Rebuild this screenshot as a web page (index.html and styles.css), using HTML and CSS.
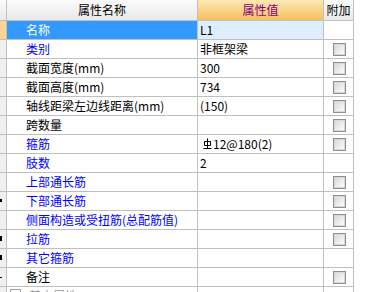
FILE: index.html
```html
<!DOCTYPE html>
<html>
<head>
<meta charset="utf-8">
<link rel="stylesheet" href="styles.css">
</head>
<body>
<div class="grid">
  <div class="c rh hd"></div>
  <div class="c hd name-h">属性名称</div>
  <div class="c hd val-h">属性值</div>
  <div class="c hd add-h">附加</div>

  <div class="c rh sel-rh"></div>
  <div class="c name sel-name">名称</div>
  <div class="c val sel-val">L1</div>
  <div class="c add"></div>

  <div class="c rh"></div>
  <div class="c name blue">类别</div>
  <div class="c val">非框架梁</div>
  <div class="c add"><span class="cb"></span></div>

  <div class="c rh"></div>
  <div class="c name">截面宽度(mm)</div>
  <div class="c val">300</div>
  <div class="c add"><span class="cb"></span></div>

  <div class="c rh"></div>
  <div class="c name">截面高度(mm)</div>
  <div class="c val">734</div>
  <div class="c add"><span class="cb"></span></div>

  <div class="c rh"></div>
  <div class="c name">轴线距梁左边线距离(mm)</div>
  <div class="c val">(150)</div>
  <div class="c add"><span class="cb"></span></div>

  <div class="c rh"></div>
  <div class="c name">跨数量</div>
  <div class="c val"></div>
  <div class="c add"><span class="cb"></span></div>

  <div class="c rh"></div>
  <div class="c name blue">箍筋</div>
  <div class="c val"><svg class="rebar" width="9" height="12" viewBox="0 0 9 12"><path d="M4.5 0.5V10.5M1.5 3.5H7.5V7.5H1.5ZM0.5 10.5H8.5" fill="none" stroke="#000" stroke-width="1"/></svg>12@180(2)</div>
  <div class="c add"><span class="cb"></span></div>

  <div class="c rh"></div>
  <div class="c name blue">肢数</div>
  <div class="c val">2</div>
  <div class="c add"></div>

  <div class="c rh"></div>
  <div class="c name blue">上部通长筋</div>
  <div class="c val"></div>
  <div class="c add"><span class="cb"></span></div>

  <div class="c rh"><span class="mark m1"></span></div>
  <div class="c name blue">下部通长筋</div>
  <div class="c val"></div>
  <div class="c add"><span class="cb"></span></div>

  <div class="c rh"></div>
  <div class="c name blue">侧面构造或受扭筋(总配筋值)</div>
  <div class="c val"></div>
  <div class="c add"><span class="cb"></span></div>

  <div class="c rh"><span class="mark m2"></span></div>
  <div class="c name blue">拉筋</div>
  <div class="c val"></div>
  <div class="c add"><span class="cb"></span></div>

  <div class="c rh"><span class="mark m2"></span></div>
  <div class="c name blue">其它箍筋</div>
  <div class="c val"></div>
  <div class="c add"></div>

  <div class="c rh"><span class="mark m3"></span></div>
  <div class="c name">备注</div>
  <div class="c val"></div>
  <div class="c add"><span class="cb"></span></div>

  <div class="c rh"></div>
  <div class="c name last"><span class="exp"></span><span class="grey">其它属性</span></div>
  <div class="c val"></div>
  <div class="c add"></div>
</div>
</body>
</html>
```

FILE: styles.css
```css
html, body {
  margin: 0;
  padding: 0;
  background: #ffffff;
  overflow: hidden;
}

body {
  width: 369px;
  height: 292px;
  font-family: "Noto Sans CJK SC", "DejaVu Sans", sans-serif;
  font-size: 12px;
  color: #000000;
}

.grid {
  display: grid;
  grid-template-columns: 7px 191px 126px 30px;
  grid-template-rows: 21px repeat(15, 19px);
  width: 354px;
}

.c {
  box-sizing: border-box;
  border-right: 1px solid #c0c0c0;
  border-bottom: 1px solid #c0c0c0;
  display: flex;
  align-items: center;
  white-space: nowrap;
  overflow: hidden;
  line-height: 18px;
}

.rh {
  background: #f0f0f0;
  position: relative;
}

.hd {
  background: linear-gradient(#fbfbfb, #e9e9e9);
  justify-content: center;
  font-size: 12px;
}

.val-h {
  background: linear-gradient(#fde8b4, #f4c060);
  color: #800080;
}

.add-h {
  color: #000000;
}

.name {
  padding-left: 19px;
}

.val {
  padding-left: 2px;
}

.add {
  justify-content: center;
  padding-left: 1px;
}

.blue {
  color: #0000ff;
}

.sel-rh {
  background: #fbd594;
}

.sel-name {
  background: #3399ff;
  color: #ffffff;
}

.sel-val {
  background: #deeefe;
}

.cb {
  display: block;
  width: 13px;
  height: 13px;
  box-sizing: border-box;
  border: 1px solid #8f8f8f;
  box-shadow: inset 0 0 0 1px #d8d8d8;
  background: linear-gradient(135deg, #d6d6d6, #ffffff);
}

.rebar {
  margin-left: 3px;
  margin-right: 1px;
}

.mark {
  position: absolute;
  left: 0;
  background: #000000;
}

.m1 {
  top: 7px;
  width: 2px;
  height: 3px;
}

.m2 {
  top: 6px;
  width: 2px;
  height: 5px;
}

.m3 {
  top: 9px;
  width: 2px;
  height: 1px;
}

.last {
  align-items: flex-start;
  padding-left: 3px;
}

.exp {
  display: block;
  width: 9px;
  height: 9px;
  margin-top: 2px;
  margin-right: 8px;
  border: 1px solid #a0a0a0;
  background: #ffffff;
}

.grey {
  color: #9a9a9a;
}
```
